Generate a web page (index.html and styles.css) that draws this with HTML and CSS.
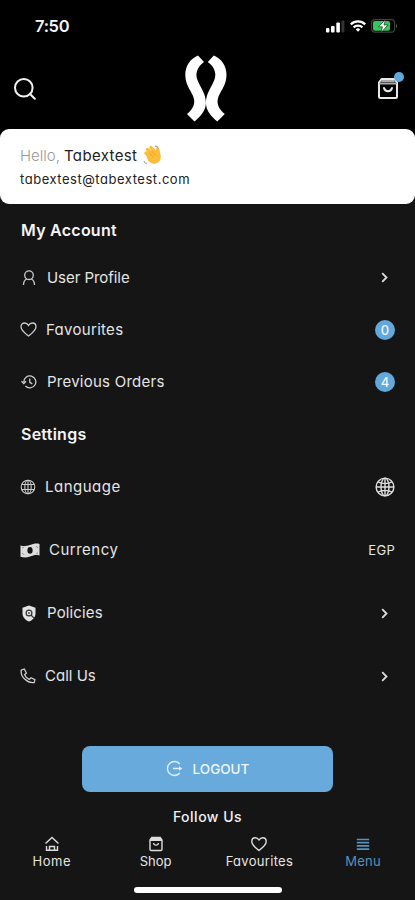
FILE: index.html
```html
<!DOCTYPE html>
<html lang="en">
<head>
    <meta charset="UTF-8">
    <meta name="viewport" content="width=device-width, initial-scale=1.0">
    <title>Menu</title>
    <link rel="stylesheet" href="styles.css">
</head>
<body>
    <div class="status-bar">
        <span class="time">7:50</span>
        <div class="status-icons">
            <svg width="19" height="13" viewBox="0 0 19 13" fill="#fff">
                <rect x="0" y="8" width="3.4" height="4.5" rx="1"/>
                <rect x="5" y="6" width="3.6" height="6.5" rx="1"/>
                <rect x="10.3" y="2.5" width="3.6" height="10" rx="1"/>
                <rect x="15.4" y="0.5" width="3" height="12" rx="1" fill="#333"/>
            </svg>
            <svg class="wifi" width="16" height="12" viewBox="0 0 16 12" fill="none" stroke="#fff" stroke-width="2.2">
                <path d="M0.8 4.4a10.3 10.3 0 0 1 14.4 0"/>
                <path d="M3.6 7.4a6.3 6.3 0 0 1 8.8 0"/>
                <path d="M5.8 9.4a3.2 3.2 0 0 1 4.4 0L8 11.7z" fill="#fff" stroke="none"/>
            </svg>
            <svg class="battery" width="27" height="14" viewBox="0 0 27 14">
                <rect x="0.6" y="0.6" width="23" height="12.6" rx="3.4" fill="none" stroke="#3c443f" stroke-width="1.2"/>
                <path d="M25 5v4c1.6-.5 1.6-3.5 0-4z" fill="#555"/>
                <rect x="2" y="2" width="17" height="9.8" rx="2" fill="#35c759"/>
                <path d="M14.5 0.5L7.5 7.8h4L10 13.5l7-7.5h-4z" fill="#fff" stroke="#0b1a0f" stroke-width=".6"/>
            </svg>
        </div>
    </div>

    <header class="header">
        <svg width="22" height="22" viewBox="0 0 22 22" fill="none" stroke="#f2f2f2" stroke-width="2" stroke-linecap="round">
            <circle cx="9.8" cy="9.8" r="8.8"/>
            <path d="M16 16l4.8 4.8"/>
        </svg>
        <svg class="logo" width="42" height="68" viewBox="0 0 42 68" fill="#fff">
            <path d="M13 .5L19 7C12 12 10 19 12.5 25C15 32 20.9 38 20.9 48C20.7 56 15 62 9.5 66.5L2 59C8 54 10 49 9 44C7 36 .3 31 .3 20C.3 11 5 4 13 .5z"/>
            <path d="M28.8 .5L22.8 7C29.8 12 31.8 19 29.3 25C26.8 32 20.9 38 20.9 48C21.1 56 26.8 62 32.3 66.5L39.8 59C33.8 54 31.8 49 32.8 44C34.8 36 41.5 31 41.5 20C41.5 11 36.8 4 28.8 .5z"/>
        </svg>
        <div class="cart">
            <svg width="20" height="21" viewBox="0 0 20 21" fill="none" stroke="#e8e8e8" stroke-width="2" stroke-linejoin="round" stroke-linecap="round">
                <path d="M1 4.5L3.500 1h13L19 4.500v14a1.500 1.500 0 0 1-1.500 1.500h-15A1.500 1.500 0 0 1 1 18.500z"/>
                <path d="M2 5.500h16M4 3h12" stroke="#aaa"/>
                <path d="M6 10c1 4.300 7 4.300 8 0"/>
            </svg>
            <span class="cart-dot"></span>
        </div>
    </header>

    <section class="user-card">
        <div class="greeting">
            <span class="hello">Hello,</span>
            <span class="user-name">Tabextest</span>
            <svg class="wave" width="19" height="20" viewBox="0 0 19 20">
                <g stroke="#fdbd3a" stroke-width="3.4" stroke-linecap="round">
                    <path d="M3 8l6 6M4.5 4.5l7 7M8 2.5l6 7M14.8 4.5l.8 6"/>
                </g>
                <path d="M3 10l8-6 5 2c2.5 5 2.5 9-1 11.5-3.5 2.4-7.5 1-10-2z" fill="#fdbd3a"/>
                <path d="M6 8l4.5 4.5M8.5 6l4.5 4.5" stroke="#e89a20" stroke-width=".7"/>
                <path d="M12 1.2c1.8 0 2.8 1 3 2.5M1 16c.3 1.6 1.2 2.5 3 2.7" fill="none" stroke="#9aa7ad" stroke-width="1.2"/>
            </svg>
        </div>
        <div class="email">tabextest@tabextest.com</div>
    </section>

    <main class="menu">
        <h2>My Account</h2>
        <ul class="account-list">
            <li>
                <svg class="icon icon-user" width="14" height="16" viewBox="0 0 14 16">
                    <circle cx="7" cy="5.2" r="4.3"/>
                    <path d="M4.8 9C2.5 10 1.5 12.5 1.5 15M9.2 9c2.3 1 3.3 3.5 3.3 6"/>
                </svg>
                <span class="label label-user">User Profile</span>
                <svg class="chevron" width="7" height="11" viewBox="0 0 7 11"><path d="M1.2 1.2l4.3 4.3-4.3 4.3"/></svg>
            </li>
            <li>
                <svg class="icon icon-heart" width="17" height="15" viewBox="0 0 17 15">
                    <path d="M8.5 14C5 11.3 1 8.5 1 4.8 1 2.6 2.6 1 4.6 1c1.7 0 3 .9 3.9 2.4C9.4 1.9 10.7 1 12.4 1c2 0 3.6 1.6 3.6 3.8 0 3.7-4 6.5-7.5 9.2z"/>
                </svg>
                <span class="label label-fav">Favourites</span>
                <span class="badge">0</span>
            </li>
            <li>
                <svg class="icon icon-history" width="16" height="14" viewBox="0 0 16 14">
                    <path d="M2.8 7a6 6 0 1 1 1.6 4M.5 6.2l2.3 2.3 2.2-2.3M8.8 3.5V7.3l2.5 1.6"/>
                </svg>
                <span class="label label-orders">Previous Orders</span>
                <span class="badge">4</span>
            </li>
        </ul>

        <h2>Settings</h2>
        <ul class="settings-list">
            <li>
                <svg class="icon icon-globe" width="16" height="16" viewBox="0 0 16 16">
                    <circle cx="8" cy="8" r="6.8"/>
                    <ellipse cx="8" cy="8" rx="3.2" ry="6.8"/>
                    <path d="M8 1.2v13.6M1.8 5.5h12.4M1.8 10.5h12.4"/>
                </svg>
                <span class="label label-lang">Language</span>
                <svg class="globe" width="20" height="20" viewBox="0 0 20 20">
                    <circle cx="10" cy="10" r="8.9"/>
                    <ellipse cx="10" cy="10" rx="4" ry="8.9"/>
                    <path d="M10 1v18M1 10h18M3 4.9c4 2.3 10 2.3 14 0M3 15.1c4-2.3 10-2.3 14 0"/>
                </svg>
            </li>
            <li>
                <svg class="icon-cash" width="20" height="15" viewBox="0 0 20 15">
                    <path d="M.5 2.5C4 3.6 7 3 10 2s6-2 9.5-1v11.5c-3.500-1-6.500 0-9.500 1s-6 1.300-9.500.2z" fill="#ddd"/>
                    <ellipse cx="10" cy="7.4" rx="2.6" ry="3.3" fill="#151515"/>
                    <path d="M2 5c1.200 0 1.800-.6 2-1.400M2 10.500c1 0 1.800.6 2 1.500M18 4.500c-1 0-1.700-.6-1.800-1.500M18 10c-1 0-1.700.5-1.800 1.300" fill="none" stroke="#777" stroke-width=".8"/>
                </svg>
                <span class="label label-currency">Currency</span>
                <span class="value">EGP</span>
            </li>
            <li>
                <svg class="icon-shield" width="14" height="17" viewBox="0 0 14 17">
                    <path d="M7 .5l6.5 2.3v5.4c0 3.9-2.7 6.9-6.5 8.3C3.2 15.1.5 12.1.5 8.2V2.8z" fill="#e2e2e2"/>
                    <circle cx="7" cy="8" r="2.9" fill="none" stroke="#333" stroke-width="1.2"/>
                    <circle cx="7" cy="8" r="1" fill="#555"/>
                    <path d="M9 10l3 3.2" stroke="#333" stroke-width="1.2"/>
                </svg>
                <span class="label label-policies">Policies</span>
                <svg class="chevron" width="7" height="11" viewBox="0 0 7 11"><path d="M1.2 1.2l4.3 4.3-4.3 4.3"/></svg>
            </li>
            <li>
                <svg class="icon icon-phone" width="16" height="16" viewBox="0 0 16 16">
                    <path d="M1.2 2.2L4.3 1l2.1 4-1.8 1.7c.9 2.2 2.4 3.7 4.6 4.7l1.8-1.7 3.9 1.9-.7 2.9C7.5 15.6.4 9 1.2 2.2z"/>
                </svg>
                <span class="label label-call">Call Us</span>
                <svg class="chevron" width="7" height="11" viewBox="0 0 7 11"><path d="M1.2 1.2l4.3 4.3-4.3 4.3"/></svg>
            </li>
        </ul>

        <button class="logout">
            <svg width="17" height="17" viewBox="0 0 17 17" fill="none" stroke="#e3f0fa" stroke-width="1.3">
                <path d="M13.8 4A7 7 0 1 0 13.8 13M7 8.5h7"/>
                <path d="M13 6.2l3.3 2.3L13 10.8z" fill="#e3f0fa" stroke="none"/>
            </svg>
            <span>LOGOUT</span>
        </button>
        <h3>Follow Us</h3>
    </main>

    <nav class="tab-bar">
        <a class="tab">
            <svg width="16" height="16" viewBox="0 0 16 16">
                <path d="M1.5 7.5L8 1.5l6.5 6M2.5 10v4.3h11V10M5.5 14v-3.5h5V14M6 10.5h4"/>
            </svg>
            <span class="tab-home">Home</span>
        </a>
        <a class="tab">
            <svg width="16" height="16" viewBox="0 0 16 16">
                <path d="M2 4l1.8-2.5h8.4L14 4v9.3a1.2 1.2 0 0 1-1.2 1.2H3.2A1.2 1.2 0 0 1 2 13.3zM2 4.2h12M3.5 2.8h9M5.5 7c.5 2.8 4.5 2.8 5 0"/>
            </svg>
            <span class="tab-shop">Shop</span>
        </a>
        <a class="tab">
            <svg width="16" height="16" viewBox="0 0 16 16">
                <path d="M8 14.5C4.7 12 .8 9 .8 5.5.8 3.3 2.3 1.8 4.3 1.8 5.9 1.8 7.2 2.7 8 4c.8-1.3 2.1-2.2 3.7-2.2 2 0 3.5 1.5 3.5 3.7 0 3.5-3.9 6.5-7.2 9z"/>
            </svg>
            <span class="tab-fav">Favourites</span>
        </a>
        <a class="tab active">
            <svg width="16" height="16" viewBox="0 0 16 16">
                <path d="M1.8 3.5h12.4M1.8 6.7h12.4M1.8 9.9h12.4M1.8 13.1h12.4"/>
            </svg>
            <span class="tab-menu">Menu</span>
        </a>
    </nav>
    <div class="home-indicator"></div>
</body>
</html>
```

FILE: styles.css
```css
* {
    box-sizing: border-box;
}

body {
    margin: 0;
    height: 900px;
    display: flex;
    flex-direction: column;
    background: #151515;
    color: #e4e4e4;
    font-family: Inter, "Open Sans", sans-serif;
    font-feature-settings: "cv11";
    overflow: hidden;
}

svg {
    display: block;
    flex: none;
}

h2, h3, ul {
    margin: 0;
    padding: 0;
}

.status-bar {
    height: 50px;
    padding: 2px 17px 0 35px;
    display: flex;
    align-items: center;
    justify-content: space-between;
    background: #000;
}

.time {
    font-size: 16.5px;
    font-weight: 600;
    letter-spacing: -0.3px;
    color: #f4f4f4;
}

.status-icons {
    display: flex;
    align-items: center;
}

.wifi {
    margin-left: 5px;
}

.battery {
    margin-left: 5px;
}

.header {
    height: 85px;
    margin-bottom: -6px;
    padding: 0 17.5px 8px 14px;
    display: flex;
    align-items: center;
    justify-content: space-between;
    background: #000;
}

.cart {
    position: relative;
    margin-left: 2px;
}

.cart-dot {
    position: absolute;
    top: -6px;
    right: -6px;
    width: 10px;
    height: 10px;
    border-radius: 50%;
    background: #5ea8dc;
}

.user-card {
    height: 75px;
    padding: 15px 20px 0;
    border-radius: 9px;
    background: #fff;
    color: #222;
}

.greeting {
    display: flex;
    align-items: center;
    height: 22px;
    font-size: 15px;
}

.hello {
    width: 44px;
    color: #999;
    font-weight: 300;
}

.user-name {
    letter-spacing: 0.35px;
}

.wave {
    margin-left: 6px;
}

.email {
    margin-top: 5px;
    font-size: 13px;
    line-height: 17px;
    letter-spacing: 0.53px;
}

h2 {
    height: 47px;
    padding: 5px 21px 0;
    line-height: 43px;
    font-size: 16px;
    font-weight: 600;
    letter-spacing: 0.25px;
    color: #f4f4f4;
}

ul {
    list-style: none;
}

li {
    display: flex;
    align-items: center;
    padding: 0 20px;
}

.account-list li {
    height: 52.3px;
}

.account-list {
    padding-top: 0.5px;
    margin-bottom: -0.5px;
}

.settings-list {
    padding-top: 1px;
}

.settings-list li {
    height: 63px;
}

.label {
    flex: 1;
    font-size: 15px;
    line-height: 22px;
}

.label-user {
    letter-spacing: -0.05px;
}

.label-fav {
    letter-spacing: 0.3px;
}

.label-orders {
    letter-spacing: 0.25px;
}

.label-lang {
    letter-spacing: 0.5px;
}

.label-currency {
    letter-spacing: 0.5px;
}

.label-policies {
    letter-spacing: 0.15px;
}

.icon {
    fill: none;
    stroke: #ccc;
    stroke-width: 1.3;
}

.icon-user {
    margin: 0 11px 0 2px;
}

.icon-heart {
    margin-right: 9px;
}

.icon-history {
    margin: 0 10px 0 1px;
}

.icon-globe {
    margin-right: 9px;
    stroke-width: 1.1;
}

.icon-cash {
    margin-right: 9px;
}

.icon-shield {
    margin: 0 11px 0 2px;
}

.icon-phone {
    margin-right: 9px;
}

.chevron {
    margin-right: 7px;
    fill: none;
    stroke: #ddd;
    stroke-width: 1.8;
}

.globe {
    fill: none;
    stroke: #ddd;
    stroke-width: 1.4;
}

.badge {
    width: 20px;
    height: 20px;
    border-radius: 50%;
    background: #62a8db;
    color: #edf6fc;
    font-size: 13px;
    font-weight: 500;
    line-height: 20px;
    text-align: center;
}

.value {
    font-size: 13px;
    letter-spacing: 0.3px;
}

.logout {
    display: flex;
    align-items: center;
    justify-content: center;
    gap: 10px;
    width: 251px;
    height: 46px;
    margin: 38px auto 0 82px;
    padding: 0;
    border: none;
    border-radius: 8px;
    background: #67aadb;
    color: #eef6fc;
    font-family: inherit;
    font-size: 13.5px;
    font-weight: 500;
}

h3 {
    margin-top: 14px;
    line-height: 22px;
    font-size: 14px;
    font-weight: 500;
    letter-spacing: 0.5px;
    text-align: center;
    color: #f0f0f0;
}

.tab-bar {
    display: grid;
    grid-template-columns: repeat(4, 1fr);
    margin-top: 8px;
}

.tab {
    display: flex;
    flex-direction: column;
    align-items: center;
    font-size: 13px;
    line-height: 18px;
}

.tab svg {
    fill: none;
    stroke: #ddd;
    stroke-width: 1.4;
}

.tab-home {
    letter-spacing: 0.6px;
}

.tab-fav {
    letter-spacing: 0.3px;
}

.tab-menu {
    letter-spacing: 0.3px;
}

.tab.active {
    color: #5592bd;
}

.tab.active svg {
    stroke: #5592bd;
    stroke-width: 1.7;
}

.home-indicator {
    width: 148px;
    height: 6px;
    margin: 17px auto 0;
    border-radius: 3px;
    background: #fff;
}
```
